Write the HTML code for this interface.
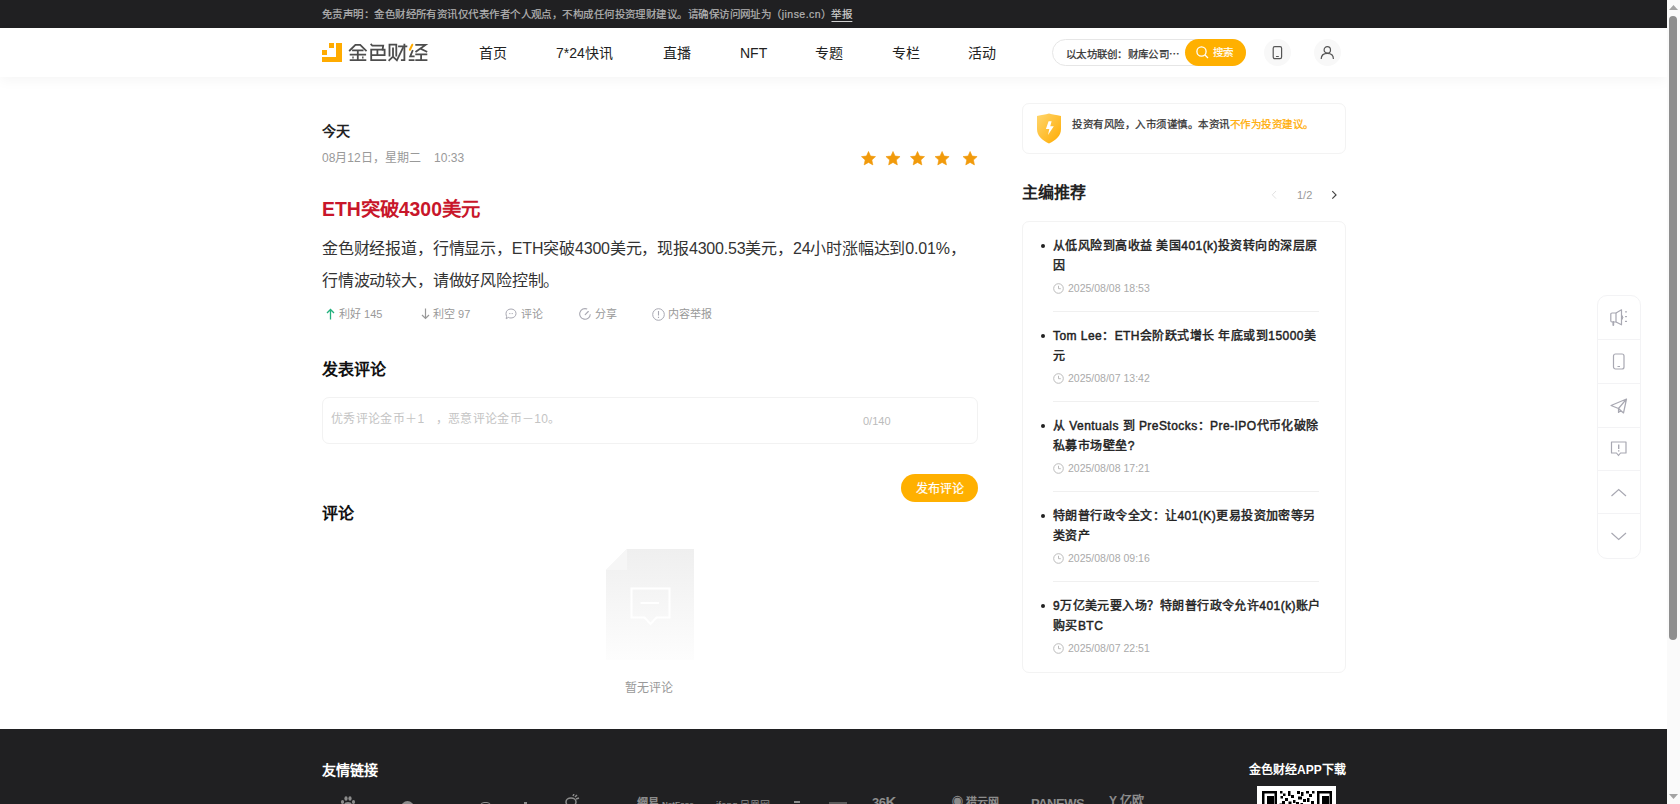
<!DOCTYPE html>
<html lang="zh-CN"><head><meta charset="utf-8">
<style>
*{box-sizing:border-box;margin:0;padding:0}
html,body{width:1680px;height:804px;overflow:hidden;background:#fff;font-family:"Liberation Sans",sans-serif;color:#222}
.a{position:absolute;white-space:nowrap}
#topbar{position:absolute;left:0;top:0;width:1667px;height:28px;background:#202022;}
#topbar .t{position:absolute;left:322px;top:8px;font-size:10.5px;letter-spacing:0.45px;line-height:13px;color:#b4b4b4;white-space:nowrap;-webkit-text-stroke:0.2px}
#topbar .t u{text-decoration:underline;text-underline-offset:3px;color:#d0d0d0}
#header{position:absolute;left:0;top:28px;width:1667px;height:49px;background:#fff;box-shadow:0 4px 12px rgba(0,0,0,0.04)}
.nav{position:absolute;top:16px;font-size:14px;line-height:18px;color:#222;white-space:nowrap}
#search{position:absolute;left:1052px;top:11px;width:194px;height:27px;border:1px solid #e6e6e6;border-radius:14px}
#search .q{position:absolute;left:13px;top:8px;font-size:10.5px;line-height:13px;color:#333;-webkit-text-stroke:0.25px;letter-spacing:0.3px}
#search .btn{position:absolute;left:132px;top:-1px;width:61px;height:27px;background:#ffb000;border-radius:14px;color:#fff;font-size:11px}
.circ{position:absolute;top:39px;width:27px;height:27px;border-radius:14px;background:#f8f8f8}
#scroll{position:absolute;left:1667px;top:0;width:13px;height:804px;background:#fafafa}
#footer{position:absolute;left:0;top:729px;width:1667px;height:75px;background:#202022}
.gray{color:#999}
.act{position:absolute;top:307px;font-size:11px;line-height:14px;color:#999;white-space:nowrap}
.act svg{position:absolute;top:1px}
.card{position:absolute;border:1px solid #f3f3f3;border-radius:7px;background:#fff}
.rec{position:absolute;left:1053px;width:266px}
.rec .tt{font-size:12px;line-height:19.5px;font-weight:normal;-webkit-text-stroke:0.45px #222;color:#222;white-space:nowrap;letter-spacing:0.45px;position:relative;top:1px}
.rec .dot{position:absolute;left:-12px;top:8px;width:4px;height:4px;border-radius:2px;background:#222}
.rec .dt{position:absolute;left:15px;font-size:10.5px;line-height:12px;color:#aaa;white-space:nowrap}
.rec .ck{position:absolute;left:0}
.rec .ln{position:absolute;left:0;width:266px;height:1px;background:#f0f0f0}
.tool{position:absolute;left:1597px;top:295px;width:44px;height:264px;border:1px solid #f3f3f5;border-radius:10px}
.tool .c{position:absolute;left:0;width:42px;height:44px;border-bottom:1px solid #f3f3f5}
.tool svg{position:absolute;left:11px;top:12px}
</style></head><body>
<div id="topbar"><div class="t">免责声明：金色财经所有资讯仅代表作者个人观点，不构成任何投资理财建议。请确保访问网址为（jinse.cn）<u>举报</u></div></div>
<div id="header">
  <svg class="a" style="left:322px;top:15px" width="20" height="20" viewBox="0 0 20 20"><rect x="7" y="0" width="5" height="5" fill="#ffab00"/><rect x="0" y="7" width="5" height="5" fill="#ffab00"/><rect x="14" y="0" width="6" height="19" fill="#ffab00"/><rect x="0" y="14" width="20" height="5" fill="#ffab00"/></svg>
  <svg class="a" style="left:340px;top:12px" width="95" height="24" viewBox="340 40 95 24">
  <g fill="none" stroke="#4d4d4d" stroke-width="1.8" stroke-linecap="square" stroke-linejoin="miter">
    <path d="M349.8 50.4L355.4 44.8H360.2L365.9 50.4"/>
    <path d="M353 50.3H362.6M350.6 54.6H365.2M357.8 50.3V60.1M350.6 60.1H365.4"/>
    <path d="M353 57.3V57.9M362.8 57.3V57.9" stroke-width="1.4"/>
    <path d="M371.3 44.6L372.3 45.7H383.2L382.6 49.6"/>
    <path d="M371.2 49.6H384.6V55.2H371.2M377.4 49.6V55.2M371.2 49.6V60.1H385.3"/>
    <path d="M389.5 55.5V44.6H396.3V55.5M393 48.4V56.7L389.3 60.2M393 56.7L396.9 60.3L402.9 48"/>
    <path d="M399 46.3H406.4M404.4 44.6V60.2H401.8"/>
    <path d="M412.5 50.9L410.2 56.4H413.7M409.6 60.1H413.6"/>
    <path d="M416.2 44.9H425.5L416.2 51.5M421.3 49L426.4 51.5M416.2 54.3H426.4M421.1 54.3V60.1M416.2 60.1H426.5"/>
  </g>
  <path d="M412.3 44.7L409.9 49.8" stroke="#ffab00" stroke-width="2" stroke-linecap="round"/>
</svg>
  <div class="nav" style="left:479px">首页</div>
  <div class="nav" style="left:556px">7*24快讯</div>
  <div class="nav" style="left:663px">直播</div>
  <div class="nav" style="left:740px">NFT</div>
  <div class="nav" style="left:815px">专题</div>
  <div class="nav" style="left:892px">专栏</div>
  <div class="nav" style="left:968px">活动</div>
  <div id="search"><div class="q">以太坊联创：财库公司⋯</div><div class="btn">
    <svg class="a" style="left:11px;top:7px" width="13" height="13" viewBox="0 0 13 13"><circle cx="5.5" cy="5.5" r="4.6" fill="none" stroke="#fff" stroke-width="1.3"/><path d="M9 9 L12 12" stroke="#fff" stroke-width="1.3"/></svg>
    <div class="a" style="left:28px;top:6px;font-size:10.5px;line-height:14px;-webkit-text-stroke:0.15px #fff">搜索</div></div></div>
</div>
<div class="circ" style="left:1264px"><svg class="a" style="left:8px;top:7px" width="11" height="14" viewBox="0 0 11 14"><rect x="1.2" y="0.7" width="8.4" height="12" rx="1.6" fill="none" stroke="#555" stroke-width="1.2"/><path d="M4.4 10.5h2" stroke="#555" stroke-width="1.1" stroke-linecap="round"/></svg></div>
<div class="circ" style="left:1314px"><svg class="a" style="left:6px;top:7px" width="15" height="14" viewBox="0 0 15 14"><circle cx="7.3" cy="3.9" r="3.2" fill="none" stroke="#555" stroke-width="1.2"/><path d="M1.2 13C1.2 9.3 3.8 7.3 7.3 7.3C10.8 7.3 13.4 9.3 13.4 13" fill="none" stroke="#555" stroke-width="1.2"/></svg></div>

<!-- article -->
<div class="a" style="left:322px;top:122px;font-size:14px;line-height:18px;font-weight:bold;color:#222">今天</div>
<div class="a" style="left:322px;top:150px;font-size:12px;line-height:16px;color:#999">08月12日，星期二&nbsp;&nbsp;&nbsp;&nbsp;10:33</div>
<svg class="a" style="left:861px;top:151px" width="118" height="15" viewBox="0 0 118 15">
  <g fill="#f19a0b">
  <path id="st" d="M7.50 0.50 L9.56 5.07 L14.54 5.61 L10.83 8.98 L11.85 13.89 L7.50 11.40 L3.15 13.89 L4.17 8.98 L0.46 5.61 L5.44 5.07Z" stroke="#f19a0b" stroke-width="0.6" stroke-linejoin="round"/>
  <use href="#st" x="24.5"/><use href="#st" x="49"/><use href="#st" x="73.6"/><use href="#st" x="101.6"/>
  </g></svg>
<div class="a" style="left:322px;top:196px;font-size:19.4px;line-height:26px;font-weight:bold;color:#c8162a">ETH突破4300美元</div>
<div class="a" style="left:322px;top:233px;width:660px;font-size:16px;line-height:31.5px;color:#333;letter-spacing:-0.18px;white-space:normal">金色财经报道，行情显示，ETH突破4300美元，现报4300.53美元，24小时涨幅达到0.01%，<br>行情波动较大，请做好风险控制。</div>

<div class="act" style="left:326px"><svg width="9" height="12" viewBox="0 0 9 12"><path d="M4.5 11.5V1.5M1 5L4.5 1.5L8 5" fill="none" stroke="#22b07d" stroke-width="1.3"/></svg><span style="margin-left:13px">利好 145</span></div>
<div class="act" style="left:421px"><svg width="9" height="12" viewBox="0 0 9 12"><path d="M4.5 0.5V10.5M1 7L4.5 10.5L8 7" fill="none" stroke="#999" stroke-width="1.2"/></svg><span style="margin-left:12px">利空 97</span></div>
<div class="act" style="left:505px"><svg width="12" height="12" viewBox="0 0 12 12"><path d="M6 1C9 1 11 3 11 5.5C11 8 9 10 6 10C5 10 4 9.8 3.3 9.4L1.2 10.8L1.6 8.4C1.2 7.5 1 6.6 1 5.5C1 3 3 1 6 1Z" fill="none" stroke="#a8a8b2" stroke-width="1"/><path d="M4 5.6h.8M5.6 5.6h.8M7.2 5.6h.8" stroke="#a8a8b2" stroke-width="1"/></svg><span style="margin-left:16px">评论</span></div>
<div class="act" style="left:579px"><svg width="12" height="12" viewBox="0 0 12 12"><path d="M11.3 6.2A5.3 5.3 0 1 1 8.2 1.1" fill="none" stroke="#a8a8b2" stroke-width="1.1"/><path d="M6.2 6.6L9.3 3.5" fill="none" stroke="#a8a8b2" stroke-width="1.1" stroke-linecap="round"/></svg><span style="margin-left:16px">分享</span></div>
<div class="act" style="left:652px"><svg width="13" height="13" viewBox="0 0 13 13"><circle cx="6.5" cy="6.5" r="5.8" fill="none" stroke="#a8a8b2" stroke-width="1"/><path d="M6.5 3v4.5M6.5 8.8v1.2" stroke="#a8a8b2" stroke-width="1.1"/></svg><span style="margin-left:16px">内容举报</span></div>

<div class="a" style="left:322px;top:360px;font-size:16px;line-height:20px;font-weight:bold;color:#111">发表评论</div>
<div class="card" style="left:322px;top:397px;width:656px;height:47px;border-color:#f2f2f2"></div>
<div class="a" style="left:331px;top:411px;font-size:12px;line-height:16px;color:#c4c4c4;letter-spacing:0.35px">优秀评论金币＋1&nbsp;&nbsp;&nbsp;，恶意评论金币－10。</div>
<div class="a" style="left:863px;top:414px;font-size:11px;line-height:14px;color:#bbb">0/140</div>
<div class="a" style="left:901px;top:474px;width:77px;height:28px;border-radius:14px;background:#ffb000;color:#fff;font-size:12px;line-height:30px;text-align:center;-webkit-text-stroke:0.2px #fff">发布评论</div>
<div class="a" style="left:322px;top:504px;font-size:16px;line-height:20px;font-weight:bold;color:#111">评论</div>

<svg class="a" style="left:606px;top:549px" width="88" height="111" viewBox="0 0 88 111">
  <defs><linearGradient id="g1" x1="0" y1="0" x2="0" y2="1"><stop offset="0" stop-color="#efefef"/><stop offset="1" stop-color="#fdfdfd"/></linearGradient></defs>
  <path d="M21 0H88V111H0V21Z" fill="url(#g1)"/>
  <path d="M21 0V21H0Z" fill="#f6f6f6"/>
  <path d="M25.5 39.5H63.5V68.5H50.5L44.5 75L38.5 68.5H25.5Z" fill="none" stroke="#fff" stroke-width="2"/>
  <path d="M34.5 54H53" stroke="#fff" stroke-width="2"/>
</svg>
<div class="a" style="left:625px;top:680px;font-size:12px;line-height:16px;color:#999">暂无评论</div>

<!-- sidebar -->
<div class="card" style="left:1022px;top:103px;width:324px;height:51px"></div>
<svg class="a" style="left:1036px;top:113px" width="26" height="31" viewBox="0 0 26 31">
  <defs><linearGradient id="g2" x1="0" y1="0" x2="1" y2="1"><stop offset="0" stop-color="#ffd66e"/><stop offset="1" stop-color="#ffab00"/></linearGradient></defs>
  <path d="M1 3C6 2 9 1.5 13 0.5C17 1.5 20 2 25 3V16C25 23 20 27 13 30.5C6 27 1 23 1 16Z" fill="url(#g2)"/>
  <path d="M12.6 8.2L15.6 8.2L14.3 13.2L17.8 13.2L12 21.9L13.3 15.9L9.9 15.9Z" fill="#fff"/>
</svg>
<div class="a" style="left:1072px;top:117px;font-size:10.5px;letter-spacing:0.5px;line-height:14px;color:#333;-webkit-text-stroke:0.25px">投资有风险，入市须谨慎。本资讯<span style="color:#ffab00">不作为投资建议。</span></div>

<div class="a" style="left:1022px;top:182px;font-size:16px;line-height:22px;color:#222;font-weight:bold">主编推荐</div>
<svg class="a" style="left:1270px;top:189px" width="8" height="11" viewBox="0 0 8 11"><path d="M6 2L2.3 5.8L6 9.6" fill="none" stroke="#e2e2e2" stroke-width="1"/></svg>
<div class="a" style="left:1297px;top:188px;font-size:11px;line-height:14px;color:#999">1/2</div>
<svg class="a" style="left:1330px;top:189px" width="8" height="11" viewBox="0 0 8 11"><path d="M2.3 2.2L6 5.9L2.3 9.6" fill="none" stroke="#444" stroke-width="1.2"/></svg>

<div class="card" style="left:1022px;top:221px;width:324px;height:452px"></div>
<div class="rec" style="top:236px"><div class="dot"></div><div class="tt">从低风险到高收益 美国401(k)投资转向的深层原<br>因</div>
  <svg class="ck" style="top:47px" width="11" height="11" viewBox="0 0 11 11"><circle cx="5.5" cy="5.5" r="4.8" fill="none" stroke="#bbb" stroke-width="1"/><path d="M5.5 2.8V5.7H7.8" fill="none" stroke="#bbb" stroke-width="1"/></svg>
  <div class="dt" style="top:46px">2025/08/08 18:53</div><div class="ln" style="top:75px"></div></div>
<div class="rec" style="top:326px"><div class="dot"></div><div class="tt">Tom Lee：ETH会阶跃式增长 年底或到15000美<br>元</div>
  <svg class="ck" style="top:47px" width="11" height="11" viewBox="0 0 11 11"><circle cx="5.5" cy="5.5" r="4.8" fill="none" stroke="#bbb" stroke-width="1"/><path d="M5.5 2.8V5.7H7.8" fill="none" stroke="#bbb" stroke-width="1"/></svg>
  <div class="dt" style="top:46px">2025/08/07 13:42</div><div class="ln" style="top:75px"></div></div>
<div class="rec" style="top:416px"><div class="dot"></div><div class="tt">从 Ventuals 到 PreStocks：Pre-IPO代币化破除<br>私募市场壁垒?</div>
  <svg class="ck" style="top:47px" width="11" height="11" viewBox="0 0 11 11"><circle cx="5.5" cy="5.5" r="4.8" fill="none" stroke="#bbb" stroke-width="1"/><path d="M5.5 2.8V5.7H7.8" fill="none" stroke="#bbb" stroke-width="1"/></svg>
  <div class="dt" style="top:46px">2025/08/08 17:21</div><div class="ln" style="top:75px"></div></div>
<div class="rec" style="top:506px"><div class="dot"></div><div class="tt">特朗普行政令全文：让401(K)更易投资加密等另<br>类资产</div>
  <svg class="ck" style="top:47px" width="11" height="11" viewBox="0 0 11 11"><circle cx="5.5" cy="5.5" r="4.8" fill="none" stroke="#bbb" stroke-width="1"/><path d="M5.5 2.8V5.7H7.8" fill="none" stroke="#bbb" stroke-width="1"/></svg>
  <div class="dt" style="top:46px">2025/08/08 09:16</div><div class="ln" style="top:75px"></div></div>
<div class="rec" style="top:596px"><div class="dot"></div><div class="tt">9万亿美元要入场？特朗普行政令允许401(k)账户<br>购买BTC</div>
  <svg class="ck" style="top:47px" width="11" height="11" viewBox="0 0 11 11"><circle cx="5.5" cy="5.5" r="4.8" fill="none" stroke="#bbb" stroke-width="1"/><path d="M5.5 2.8V5.7H7.8" fill="none" stroke="#bbb" stroke-width="1"/></svg>
  <div class="dt" style="top:46px">2025/08/07 22:51</div></div>

<!-- floating toolbar -->
<div class="tool">
  <div class="c" style="top:0"><svg width="20" height="20" viewBox="0 0 20 20"><path d="M3 5H7V14H3Q1.8 14 1.8 12.8V6.2Q1.8 5 3 5Z" fill="none" stroke="#a8a8b2" stroke-width="1.2"/><path d="M7 5L12.5 1.8V16.8L7 14" fill="none" stroke="#a8a8b2" stroke-width="1.2" stroke-linejoin="round"/><path d="M12.8 7.2Q15 9.5 12.8 11.8" fill="#a8a8b2" stroke="#a8a8b2" stroke-width="1"/><path d="M4.3 14V17" stroke="#a8a8b2" stroke-width="1.8" stroke-linecap="round"/><path d="M16.5 3.8h1M16.5 8.6h1M16.5 13.4h1" stroke="#a8a8b2" stroke-width="1.2" stroke-linecap="round"/></svg></div>
  <div class="c" style="top:44px"><svg width="20" height="20" viewBox="0 0 20 20"><rect x="4.5" y="2" width="10.5" height="15" rx="2" fill="none" stroke="#a8a8b2" stroke-width="1.2"/><path d="M8.5 14.5h2.5" stroke="#a8a8b2" stroke-width="1"/></svg></div>
  <div class="c" style="top:88px"><svg width="20" height="20" viewBox="0 0 20 20"><path d="M2 9.5L17.5 3L14.5 17L9.5 12.5L2 9.5Z M9.5 12.5L17.5 3 M9.5 12.5V16.5L11.5 14.3" fill="none" stroke="#a8a8b2" stroke-width="1.2" stroke-linejoin="round"/></svg></div>
  <div class="c" style="top:131px"><svg width="20" height="20" viewBox="0 0 20 20"><path d="M2.5 3H17V14H11.5L9.5 16.5L7.5 14H2.5Z" fill="none" stroke="#a8a8b2" stroke-width="1.2" stroke-linejoin="round"/><path d="M9.7 5.5V10M9.7 11.3V12.5" stroke="#a8a8b2" stroke-width="1.4"/></svg></div>
  <div class="c" style="top:174px"><svg style="top:13px" width="20" height="20" viewBox="0 0 20 20"><path d="M2.5 13L9.7 6.5L17 13" fill="none" stroke="#a8a8b2" stroke-width="1.2"/></svg></div>
  <div class="c" style="top:217px;border-bottom:none"><svg style="top:13px" width="20" height="20" viewBox="0 0 20 20"><path d="M2.5 7L9.7 13.5L17 7" fill="none" stroke="#a8a8b2" stroke-width="1.2"/></svg></div>
</div>

<!-- footer -->
<div id="footer">
  <div class="a" style="left:322px;top:32px;font-size:14px;line-height:18px;font-weight:bold;color:#fff">友情链接</div>
  <div class="a" style="left:0;top:60px;width:1200px;height:15px;overflow:hidden">
  <svg class="a" style="left:340px;top:7px" width="16" height="10" viewBox="0 0 16 10"><g fill="#8c8c8c"><ellipse cx="6" cy="2.5" rx="1.6" ry="2.2"/><ellipse cx="10" cy="2.5" rx="1.6" ry="2.2"/><ellipse cx="2.5" cy="6" rx="1.6" ry="2"/><ellipse cx="13.5" cy="6" rx="1.6" ry="2"/><ellipse cx="8" cy="9" rx="4" ry="3"/></g></svg>
  <div class="a" style="left:401px;top:12px;width:13px;height:13px;border-radius:7px;background:#8c8c8c"></div>
  <div class="a" style="left:480px;top:13px;width:11px;height:8px;border-radius:5px;border:1.5px solid #8c8c8c"></div>
  <div class="a" style="left:524px;top:13px;width:3px;height:2px;background:#8c8c8c"></div>
  <svg class="a" style="left:564px;top:5px" width="16" height="12" viewBox="0 0 16 12"><g fill="none" stroke="#8c8c8c" stroke-width="1.5"><ellipse cx="7" cy="8" rx="5" ry="4"/><path d="M9 2L10 0M11 3L13 1M12 5L15 4"/></g></svg>
  <div class="a" style="left:637px;top:8px;font-size:11px;line-height:12px;color:#8c8c8c;font-weight:bold">網易 <span style="font-size:8px">NetEase</span></div>
  <div class="a" style="left:716px;top:11px;font-size:10px;line-height:12px;color:#8c8c8c">ifeng 凤凰网</div>
  <div class="a" style="left:794px;top:12px;width:6px;height:2px;background:#8c8c8c"></div>
  <div class="a" style="left:829px;top:13px;width:18px;height:2px;background:#5a5a5a"></div>
  <div class="a" style="left:872px;top:6px;font-size:13px;line-height:14px;color:#8c8c8c;font-weight:bold;letter-spacing:-0.5px">36<span style="font-size:15px">K</span></div>
  <div class="a" style="left:952px;top:7px;font-size:11px;line-height:12px;color:#8c8c8c;font-weight:bold">◉ 猎云网</div>
  <div class="a" style="left:1031px;top:8px;font-size:13px;line-height:14px;color:#8c8c8c;font-weight:bold;letter-spacing:-0.5px">PANEWS</div>
  <div class="a" style="left:1109px;top:5px;font-size:12px;line-height:14px;color:#8c8c8c;font-weight:bold">Y 亿欧</div>
</div>
  <div class="a" style="left:1249px;top:33px;font-size:12px;line-height:16px;font-weight:bold;color:#fff">金色财经APP下载</div>
  <svg class="a" style="left:1257px;top:57px" width="79" height="20" viewBox="0 0 79 20">
    <rect width="79" height="20" fill="#fff"/>
    <g fill="#000">
    <path d="M5 5H20V20H17.5V7.5H7.5V20H5Z"/><rect x="10" y="10" width="7" height="10"/>
    <path d="M60 5H75V20H72.5V7.5H62.5V20H60Z"/><rect x="65" y="10" width="7" height="10"/>
    <rect x="23" y="5" width="2.5" height="2.5"/><rect x="26" y="7.5" width="2.5" height="2.5"/><rect x="23.5" y="10" width="2.5" height="2.5"/><rect x="28" y="12" width="3" height="3"/><rect x="25" y="15" width="3" height="3"/><rect x="22.5" y="17.5" width="2.5" height="2.5"/>
    <rect x="31" y="5" width="2.5" height="5"/><rect x="34" y="9" width="3" height="3"/><rect x="31.5" y="15.5" width="3" height="4.5"/><rect x="36" y="14" width="2.5" height="3"/>
    <rect x="40" y="5" width="3" height="3"/><rect x="44" y="6" width="2.5" height="4"/><rect x="41" y="10.5" width="4" height="3"/><rect x="39" y="16" width="3" height="4"/><rect x="46" y="13" width="3" height="3"/><rect x="43.5" y="17" width="2.5" height="3"/>
    <rect x="49" y="5" width="3" height="2.5"/><rect x="52" y="8" width="3" height="3"/><rect x="50" y="12" width="2.5" height="4"/><rect x="54" y="15" width="3" height="3"/><rect x="52" y="18" width="3" height="2"/><rect x="55" y="5" width="2.5" height="2.5"/>
    </g></svg>
</div>
<div id="scroll">
  <svg class="a" style="left:2px;top:5px" width="9" height="6" viewBox="0 0 9 6"><path d="M4.5 0L9 5H0Z" fill="#a3a3a3"/></svg>
  <div class="a" style="left:2px;top:16px;width:8px;height:624px;border-radius:4px;background:#8f8f8f"></div>
  <svg class="a" style="left:2px;top:794px" width="9" height="6" viewBox="0 0 9 6"><path d="M0 0H9L4.5 5Z" fill="#a3a3a3"/></svg>
</div>
</body></html>
